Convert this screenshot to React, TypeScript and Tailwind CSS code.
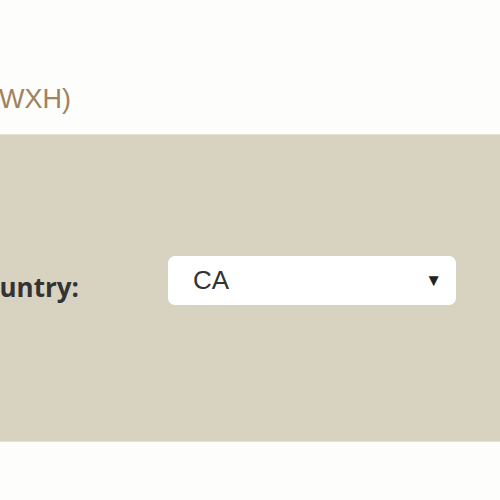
export default function App() {
  return (
    <main className="min-h-[500px] w-[500px] overflow-hidden bg-[#fdfdfb] pt-[84px] font-['Liberation_Sans',Arial,sans-serif]">
      <h2 className="-ml-[200px] w-[271px] text-right text-[27px] leading-[30px] text-[#a0825f]">
        Size (WXH)
      </h2>
      <section className="mt-[20px] h-[308px] border-y border-[#e6e3d6] bg-[#d7d3c0] pt-[121px]">
        <div className="flex items-start">
          <label className="-ml-[200px] mt-[16px] w-[279px] shrink-0 text-right font-['Open_Sans',sans-serif] text-[26px] font-bold leading-[30px] text-[#333]">
            Country:
          </label>
          <div className="ml-[89px] flex h-[49px] w-[288px] shrink-0 items-center justify-between rounded-[7px] bg-white pl-[25px] pr-[14px] text-[26px] text-[#333]">
            <span>CA</span>
            <span className="text-[17px] text-[#222]">▼</span>
          </div>
        </div>
      </section>
    </main>
  );
}
